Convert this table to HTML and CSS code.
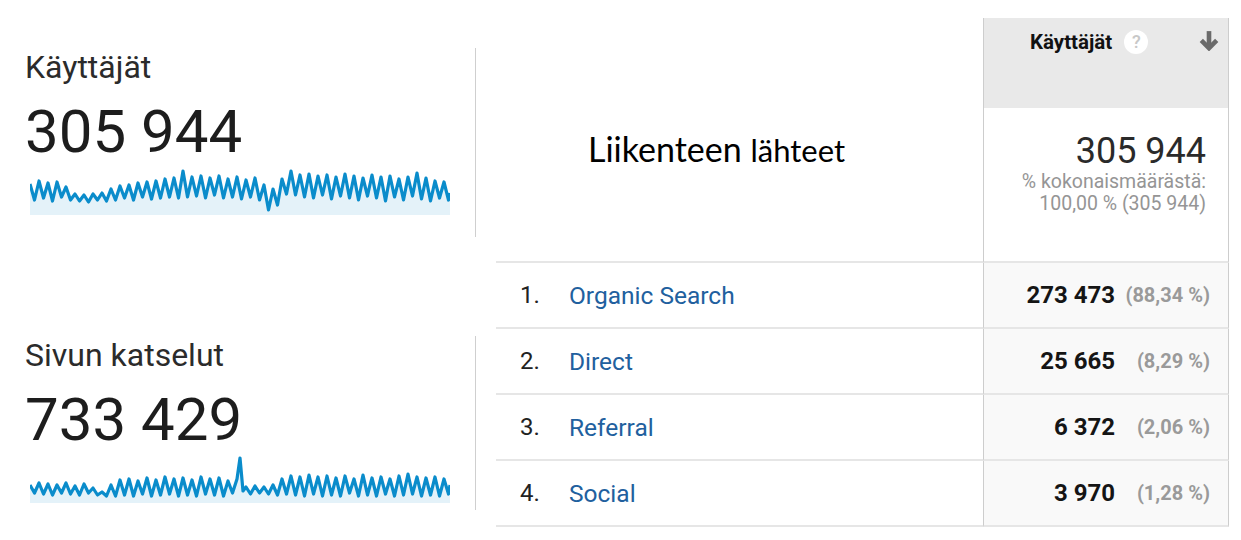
FILE: index.html
```html
<!DOCTYPE html>
<html>
<head>
	<meta charset="utf-8">
	<title>Liikenteen lähteet</title>
	<link rel="stylesheet" href="styles.css">
</head>
<body>
<div class="page">
	<div class="metrics">
		<div class="metric metric-users">
			<div class="metric-label">Käyttäjät</div>
			<div class="metric-value">305 944</div>
			<svg class="spark" viewBox="0 0 420 48">
				<polygon class="spark-fill" points="0,48 0,17 4.5,33 9,14 13.5,31 18,16 22.5,34 27,15 31.5,30 36,20 40.5,33 45,27 49.5,34 54,28 58.5,35 63,27 67.5,33 72,26 76.5,34 81,22 85.5,33 90,19 94.5,31 99,18 103.5,33 108,16 112.5,30 117,15 121.5,32 126,14 130.5,31 135,12 139.5,30 144,11 148.5,31 153,4 157.5,30 162,10 166.5,29 171,9 175.5,31 180,11 184.5,28 189,9 193.5,31 198,12 202.5,30 207,10 211.5,32 216,13 220.5,30 225,11 229.5,33 234,18 238.5,43 243,22 247.5,38 252,12 256.5,27 261,4 265.5,28 270,8 274.5,30 279,7 283.5,31 288,9 292.5,28 297,8 301.5,32 306,10 310.5,29 315,7 319.5,31 324,9 328.5,33 333,11 337.5,29 342,8 346.5,31 351,10 355.5,34 360,9 364.5,30 369,12 373.5,33 378,10 382.5,29 387,6 391.5,32 396,11 400.5,34 405,14 409.5,31 414,15 418.5,33 420,26 420,48"/>
				<polyline class="spark-line" points="0,17 4.5,33 9,14 13.5,31 18,16 22.5,34 27,15 31.5,30 36,20 40.5,33 45,27 49.5,34 54,28 58.5,35 63,27 67.5,33 72,26 76.5,34 81,22 85.5,33 90,19 94.5,31 99,18 103.5,33 108,16 112.5,30 117,15 121.5,32 126,14 130.5,31 135,12 139.5,30 144,11 148.5,31 153,4 157.5,30 162,10 166.5,29 171,9 175.5,31 180,11 184.5,28 189,9 193.5,31 198,12 202.5,30 207,10 211.5,32 216,13 220.5,30 225,11 229.5,33 234,18 238.5,43 243,22 247.5,38 252,12 256.5,27 261,4 265.5,28 270,8 274.5,30 279,7 283.5,31 288,9 292.5,28 297,8 301.5,32 306,10 310.5,29 315,7 319.5,31 324,9 328.5,33 333,11 337.5,29 342,8 346.5,31 351,10 355.5,34 360,9 364.5,30 369,12 373.5,33 378,10 382.5,29 387,6 391.5,32 396,11 400.5,34 405,14 409.5,31 414,15 418.5,33 420,26"/>
			</svg>
		</div>
		<div class="metric metric-views">
			<div class="metric-label">Sivun katselut</div>
			<div class="metric-value">733 429</div>
			<svg class="spark" viewBox="0 0 420 48">
				<polygon class="spark-fill" points="0,48 0,30 4.5,38 9,28 13.5,39 18,29 22.5,40 27,30 31.5,38 36,28 40.5,39 45,31 49.5,40 54,29 58.5,38 63,33 67.5,40 72,37 76.5,41 81,30 85.5,41 90,25 94.5,40 99,24 103.5,41 108,26 112.5,39 117,23 121.5,41 126,25 130.5,40 135,22 139.5,39 144,24 148.5,41 153,23 157.5,40 162,25 166.5,41 171,22 175.5,39 180,24 184.5,40 189,23 193.5,41 198,26 202.5,38 207,24 210,3 213,36 216,32 220.5,39 225,31 229.5,38 234,32 238.5,39 243,30 247.5,40 252,24 256.5,39 261,21 265.5,40 270,22 274.5,41 279,20 283.5,39 288,22 292.5,41 297,21 301.5,40 306,23 310.5,41 315,21 319.5,38 324,24 328.5,41 333,20 337.5,40 342,23 346.5,41 351,22 355.5,39 360,24 364.5,41 369,21 373.5,40 378,19 382.5,39 387,22 391.5,41 396,23 400.5,40 405,22 409.5,41 414,24 418.5,39 420,30 420,48"/>
				<polyline class="spark-line" points="0,30 4.5,38 9,28 13.5,39 18,29 22.5,40 27,30 31.5,38 36,28 40.5,39 45,31 49.5,40 54,29 58.5,38 63,33 67.5,40 72,37 76.5,41 81,30 85.5,41 90,25 94.5,40 99,24 103.5,41 108,26 112.5,39 117,23 121.5,41 126,25 130.5,40 135,22 139.5,39 144,24 148.5,41 153,23 157.5,40 162,25 166.5,41 171,22 175.5,39 180,24 184.5,40 189,23 193.5,41 198,26 202.5,38 207,24 210,3 213,36 216,32 220.5,39 225,31 229.5,38 234,32 238.5,39 243,30 247.5,40 252,24 256.5,39 261,21 265.5,40 270,22 274.5,41 279,20 283.5,39 288,22 292.5,41 297,21 301.5,40 306,23 310.5,41 315,21 319.5,38 324,24 328.5,41 333,20 337.5,40 342,23 346.5,41 351,22 355.5,39 360,24 364.5,41 369,21 373.5,40 378,19 382.5,39 387,22 391.5,41 396,23 400.5,40 405,22 409.5,41 414,24 418.5,39 420,30"/>
			</svg>
		</div>
	</div>

	<div class="sources">
		<div class="title-cell">Liikenteen <span class="title-small">lähteet</span></div>
		<div class="head-cell">
			<div class="head-top">
				<span class="head-label">Käyttäjät</span>
				<span class="help">?</span>
				<svg class="sort" viewBox="0 0 20 18">
					<path d="M10 0 V15"/>
					<path d="M3 8.5 L10 15.5 L17 8.5"/>
				</svg>
			</div>
			<div class="total">
				<div class="total-value">305 944</div>
				<div class="total-note">% kokonaismäärästä:</div>
				<div class="total-note">100,00 % (305 944)</div>
			</div>
		</div>

		<div class="row">
			<div class="source"><span class="rank">1.</span><a href="#">Organic Search</a></div>
			<div class="count-cell"><span class="count">273 473</span><span class="pct">(88,34 %)</span></div>
		</div>
		<div class="row">
			<div class="source"><span class="rank">2.</span><a href="#">Direct</a></div>
			<div class="count-cell"><span class="count">25 665</span><span class="pct">(8,29 %)</span></div>
		</div>
		<div class="row">
			<div class="source"><span class="rank">3.</span><a href="#">Referral</a></div>
			<div class="count-cell"><span class="count">6 372</span><span class="pct">(2,06 %)</span></div>
		</div>
		<div class="row">
			<div class="source"><span class="rank">4.</span><a href="#">Social</a></div>
			<div class="count-cell"><span class="count">3 970</span><span class="pct">(1,28 %)</span></div>
		</div>
	</div>
</div>
</body>
</html>
```

FILE: styles.css
```css
body{
	margin: 0;
	background: #fff;
	color: #212121;
	font-family: Roboto, "Liberation Sans", sans-serif;
}
.page{
	display: flex;
	align-items: flex-start;
}

/* left: metric cards */
.metrics{
	width: 476px;
	flex: none;
}
.metric{
	box-sizing: border-box;
	padding-left: 25px;
	border-right: 1px solid #cfcfcf;
}
.metric-users{
	margin-top: 48px;
	height: 189px;
}
.metric-views{
	margin-top: 99px;
	height: 174px;
}
.metric-label{
	font-size: 32px;
	line-height: 38px;
	color: #2b2b2b;
}
.metric-value{
	margin-top: 16px;
	font-size: 60px;
	line-height: 60px;
	color: #1d1d1d;
}
.spark{
	display: block;
	width: 420px;
	height: 48px;
	margin: 5px 0 0 5px;
}
.spark-fill{
	fill: #e4f2f9;
}
.spark-line{
	fill: none;
	stroke: #0a8ccb;
	stroke-width: 3.2;
	stroke-linejoin: round;
}

/* right: traffic sources table */
.sources{
	margin: 18px 0 0 20px;
	display: grid;
	grid-template-columns: 487px 246px;
	grid-template-rows: 245px repeat(4, 66px);
}
.row{
	display: contents;
}
.title-cell{
	box-sizing: border-box;
	padding: 111px 0 0 92px;
	border-bottom: 2px solid #e6e6e6;
	font-family: Lato, "Open Sans", sans-serif;
	font-size: 34px;
	line-height: 40px;
	color: #000;
}
.title-small{
	font-size: 31px;
}
.head-cell{
	display: flex;
	flex-direction: column;
	border-left: 1px solid #cdcdcd;
	border-right: 1px solid #cdcdcd;
	border-bottom: 2px solid #e6e6e6;
}
.head-top{
	box-sizing: border-box;
	height: 90px;
	display: flex;
	align-items: flex-start;
	padding: 12px 8px 0 46px;
	background: #e9e9e9;
}
.head-label{
	font-size: 20.5px;
	font-weight: 700;
	line-height: 24px;
	color: #111;
}
.help{
	width: 24px;
	height: 24px;
	margin: 0 0 0 12px;
	border-radius: 50%;
	background: #fff;
	color: #c8c8c8;
	font-size: 18px;
	font-weight: 500;
	line-height: 24px;
	text-align: center;
}
.sort{
	flex: none;
	width: 22px;
	height: 20px;
	margin: 1px 0 0 auto;
}
.sort path{
	fill: none;
	stroke: #6a6a6a;
	stroke-width: 4.2;
}
.total{
	padding: 23px 22px 0 0;
	text-align: right;
}
.total-value{
	font-size: 36px;
	line-height: 40px;
	color: #2a2a2a;
}
.total-note{
	font-size: 19.5px;
	line-height: 22px;
	color: #959595;
}
.source{
	display: flex;
	align-items: center;
	padding-left: 24px;
	border-bottom: 2px solid #e6e6e6;
	font-size: 24.5px;
}
.rank{
	width: 49px;
	font-size: 24px;
	color: #222;
}
.source a{
	color: #21609e;
	text-decoration: none;
}
.count-cell{
	display: flex;
	align-items: center;
	justify-content: flex-end;
	gap: 8px;
	padding-right: 18px;
	background: #f9f9f9;
	border-left: 1px solid #cdcdcd;
	border-right: 1px solid #cdcdcd;
	border-bottom: 2px solid #e6e6e6;
}
.count{
	font-size: 24px;
	font-weight: 700;
	color: #151515;
}
.pct{
	width: 87px;
	text-align: right;
	font-size: 20px;
	font-weight: 700;
	color: #9a9a9a;
}
```
